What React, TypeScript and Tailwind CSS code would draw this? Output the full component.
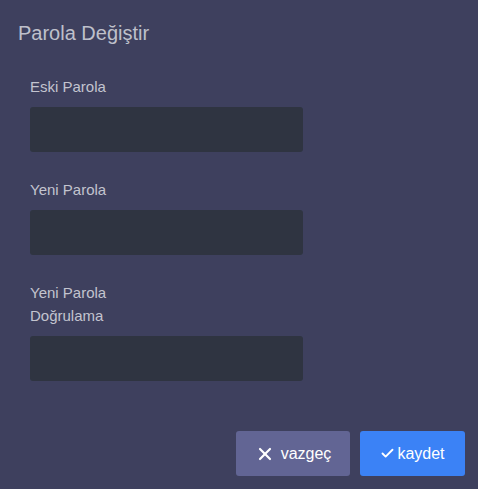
import { X, Check } from "lucide-react";

const Field = ({ label, lines }: { label?: string; lines?: string[] }) => (
  <div className="flex flex-col">
    <label className="text-[15px] leading-[23px] text-[#c3c4cf]">
      {lines ? lines.map((l) => <div key={l}>{l}</div>) : label}
    </label>
    <input
      type="password"
      className="mt-[9px] h-[45px] w-[273px] rounded-[3px] bg-[#2f3441] px-3 text-[#e5e7eb] outline-none"
    />
  </div>
);

export default function App() {
  return (
    <div
      className="flex h-[489px] w-[478px] flex-col bg-[#3e405e]"
      style={{ fontFamily: '"Liberation Sans", Arial, sans-serif' }}
    >
      <h2 className="pl-[18px] pt-[20px] text-[20px] leading-[26px] text-[#bfc0cb]">
        Parola Değiştir
      </h2>

      <div className="flex flex-col gap-[26px] pl-[30px] pt-[29px]">
        <Field label="Eski Parola" />
        <Field label="Yeni Parola" />
        <Field lines={["Yeni Parola", "Doğrulama"]} />
      </div>

      <div className="mt-auto flex justify-end gap-[10px] pb-[13px] pr-[13px]">
        <button className="flex h-[45px] w-[114px] items-center justify-center gap-[6px] rounded-[3px] bg-[#626594] text-[16px] text-white">
          <X className="h-[20px] w-[20px]" strokeWidth={2.6} />
          vazgeç
        </button>
        <button className="flex h-[45px] w-[105px] items-center justify-center gap-[2px] rounded-[3px] bg-[#3b82f6] text-[16px] text-white">
          <Check className="h-[15px] w-[15px]" strokeWidth={3} />
          kaydet
        </button>
      </div>
    </div>
  );
}
